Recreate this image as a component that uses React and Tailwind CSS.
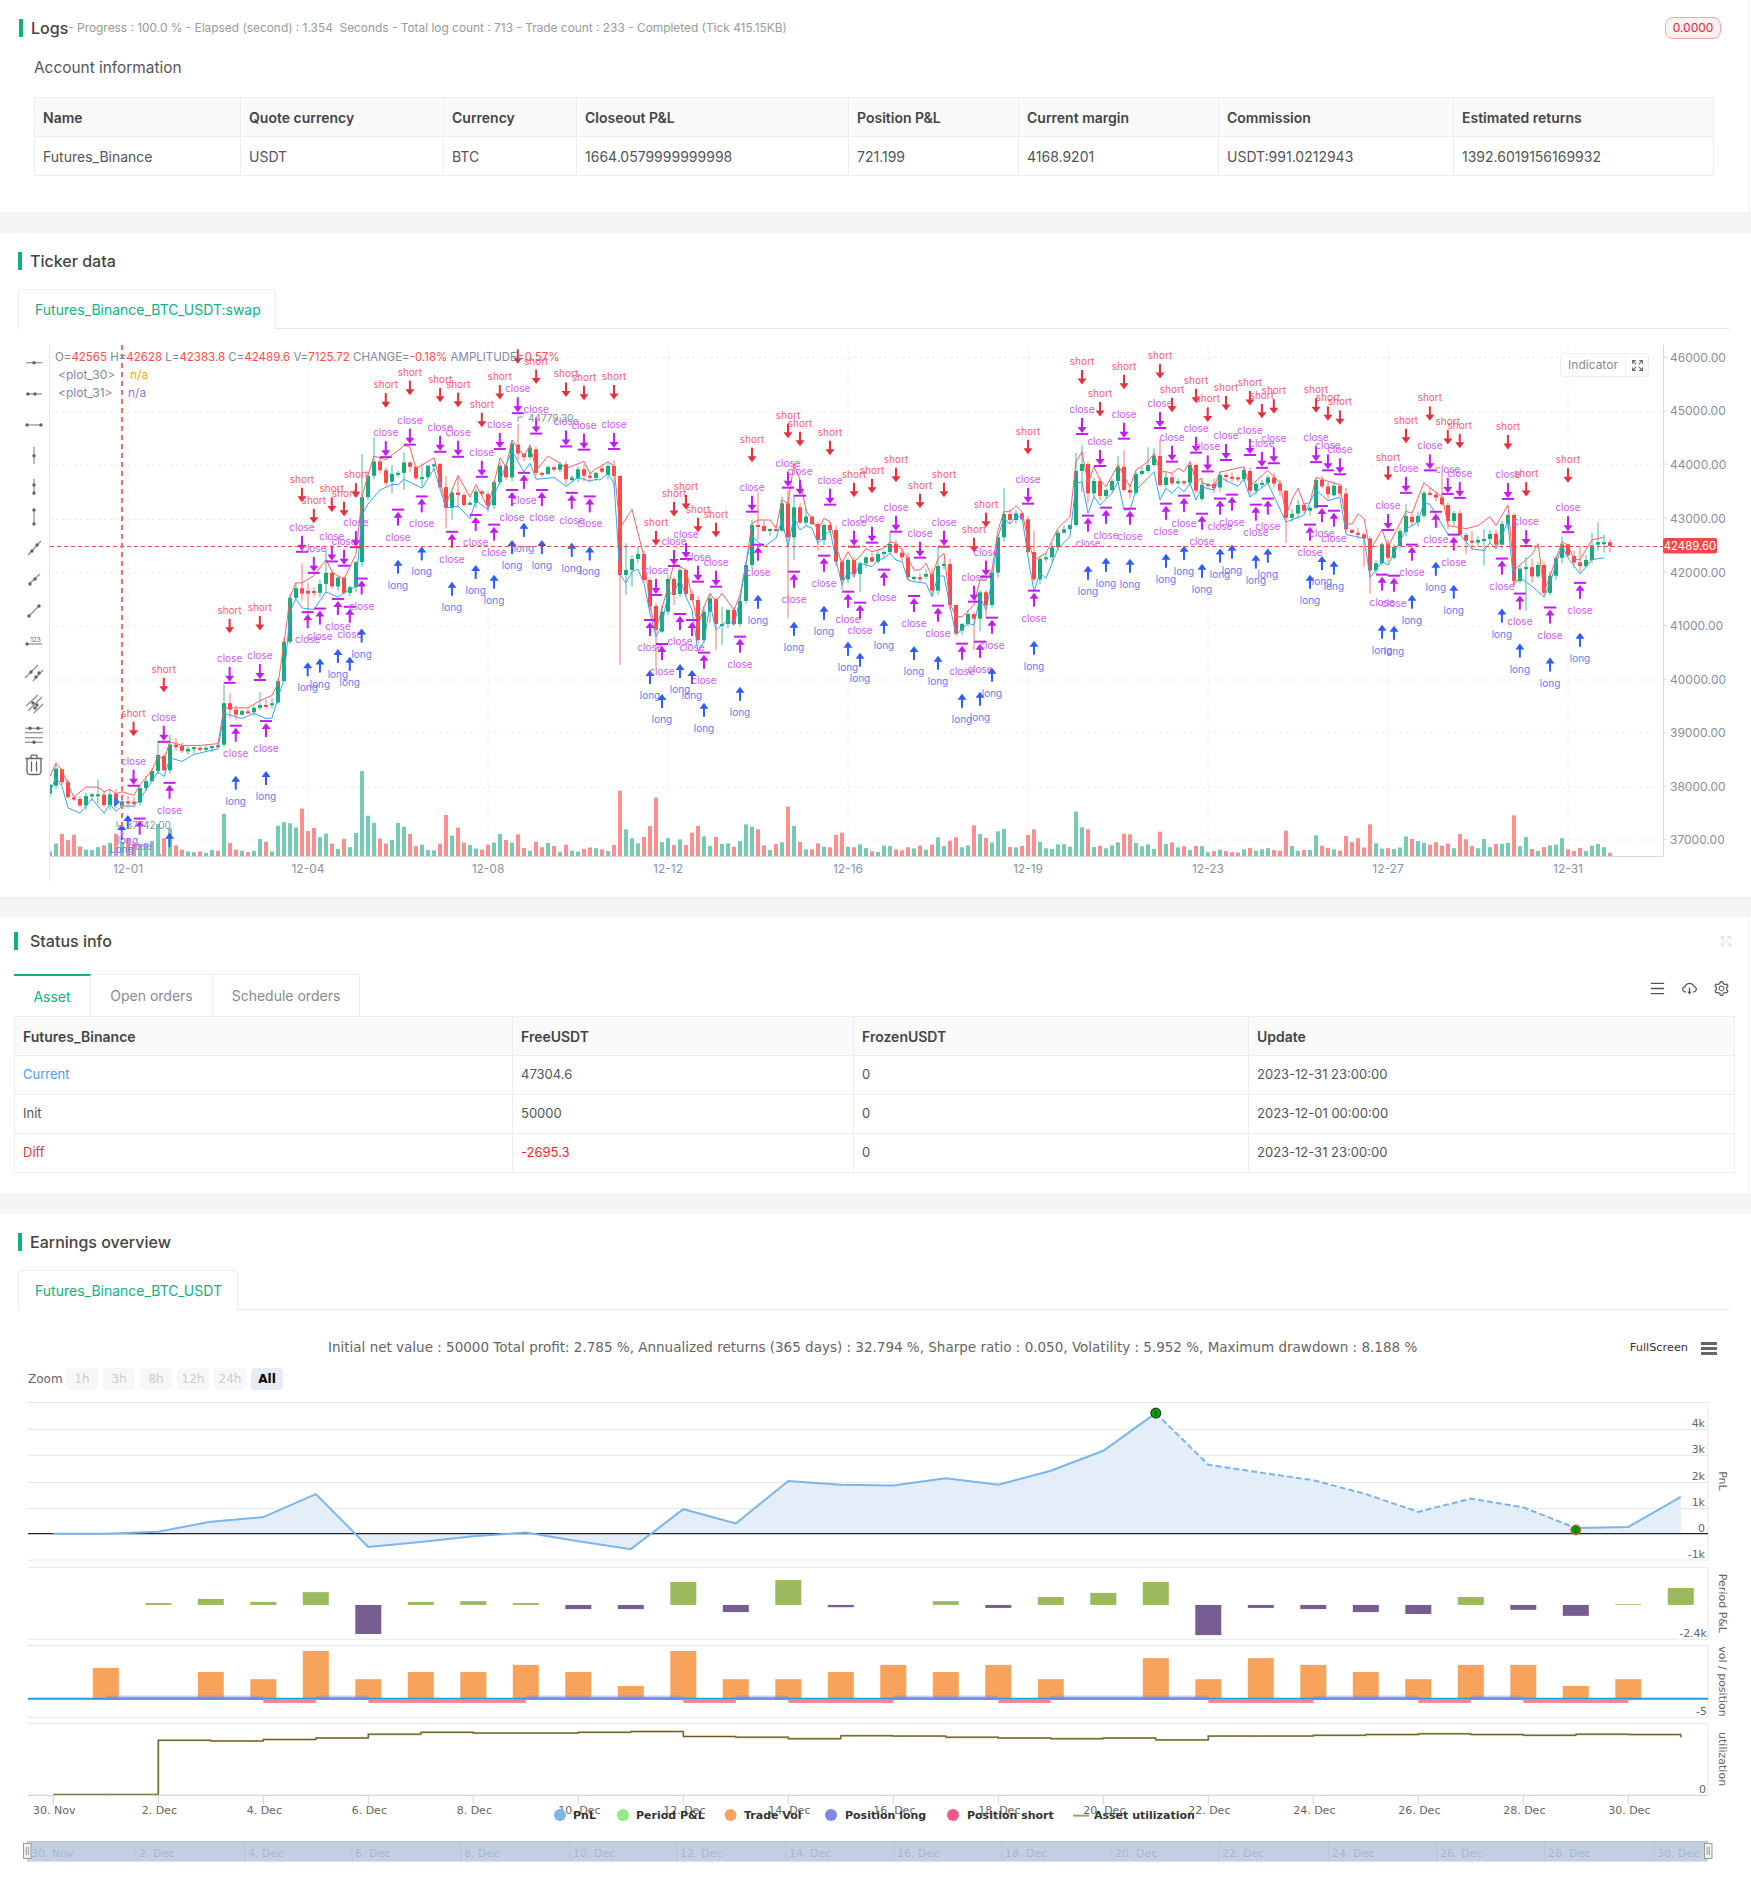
import React from "react";
import { AiOutlineCloudDownload, AiOutlineSetting, AiOutlineMenu } from "react-icons/ai";
import { Expand } from "lucide-react";

const INTER = "Inter, sans-serif";
const DJ = "'DejaVu Sans', sans-serif";

/* ---------- candle data traced from the picture ---------- */
const parse = (s) =>
  s.trim().split(/\s+/).map((t) => {
    const [a, b] = t.slice(1).split(",").map(Number);
    return { c: t[0], a, b };
  });

const segA = parse(`g1245,1270 g1200,1248 r1202,1238 r1238,1280 r1281,1285 r1285,1303 g1277,1303 g1272,1277 g1272,1275 r1273,1302 g1272,1302 r1270,1300 g1292,1305 r1292,1295 r1293,1295 g1255,1295 g1235,1255 g1207,1235 g1162,1207 r1165,1205 g1133,1205 r1133,1140 r1137,1150 g1145,1152 g1140,1144 r1142,1146 g1142,1146 g1137,1143 r1135,1137 g1017,1133 r1017,1035 r1035,1049 g1039,1049 r1040,1043 g1030,1042 g1022,1030 r1022,1026 g1017,1022 g955,1015 g845,955 g722,845 g695,722 r695,710 r702,710 r703,707 g683,708 g652,683 r652,690 g665,690 r665,708 g692,708 g622,692 g440,622 g380,440 g340,380 r340,365 r365,400 g375,397 g372,374 g343,372 r343,355 r355,387 g384,386 g352,384 g348,352 r347,412 r412,470 g427,470 r427,434 r434,462 g456,461 g424,456 r424,431 r431,463 g398,463 g352,398 r352,385 g290,385 r293,318 r318,328 g303,328 r306,372 r372,376 g356,375 r356,363 g348,363 r348,390 g385,392 g362,388 r362,380 r380,384 g372,386`);

const segB = parse(`r385,395 g378,405 r378,408 r408,705 g690,705 g657,690 g642,657 r642,720 r720,800 r798,870 g815,875 g717,815 r717,765 g690,762 r690,762 r762,780 r780,900 g815,900 g775,815 r777,852 g852,855 g810,852 r810,852 g783,852 g675,783 g555,675 r555,558 r558,573 g567,573 r567,573 g490,572 r490,592 g502,592 r502,548 g530,548 r530,552 r552,600 g555,600 r555,570 r570,665 r665,720 g660,718 r660,702 g670,702 g652,670 r652,665 g642,665 g636,641 g612,636 r612,638 r638,652 r652,712 g711,714 r712,714 g702,710 r702,752 g678,752 g672,678 r672,795 r795,880 g852,872 g822,852 r822,836 g757,836 r757,796 g698,795 g592,698 g522,592 r522,540 g520,540 r520,538 r538,636 r636,718 g657,718 g652,657 g622,652 g578,622 g568,578 g555,567 g393,555 g372,393 r372,460 g423,460 r423,468 g450,468 g423,450 g380,423 r380,450 r450,458 g402,458 g393,402 g375,393 g348,375 r348,435 g412,435 r412,430 g424,429 r424,429 g375,428 r375,452`);

const segC = parse(`g405,445 g403,407 r403,415 g378,413 r378,384 r383,388 r385,388 g364,390 r367,422 g403,422 g400,403 g385,400 r385,402 r402,422 r422,498 g487,498 g462,486 r462,478 g470,478 g392,470 r392,410 r410,432 g408,435 r408,430 r430,530 r532,540 r540,544 r544,556 r556,645 g625,645 g572,625 r570,610 g580,610 g535,577 g493,537 r495,510 g493,510 g428,492 r428,432 r433,441 r441,460 r462,507 g485,507 r485,545 r546,562 r562,567 g560,567 g557,560 g543,557 r542,573 g515,573 g490,515 r490,675 g640,675 g636,640 r636,662 g630,662 r630,708 g660,708 g610,660 g572,610 r572,603 r605,623 r623,633 g616,633 g575,616 g566,573 g566,568 r566,577`);

const volA = [1432,1410,1383,1400,1385,1418,1427,1428,1420,1415,1408,1383,1405,1395,1410,1410,1408,1403,1355,1395,1367,1415,1427,1432,1434,1432,1436,1428,1430,1327,1408,1427,1430,1434,1430,1397,1405,1432,1360,1350,1353,1365,1312,1375,1366,1392,1382,1410,1425,1397,1420,1380,1207,1332,1352,1396,1410,1400,1352,1363,1383,1417,1413,1428,1429,1410,1330,1388,1365,1407,1414,1424,1427,1413,1407,1383,1400,1407,1384,1422,1430,1405,1420,1408,1417,1433,1413,1430,1432,1425,1421,1423];
const volB = [388,393,375,212,328,355,370,351,318,233,366,354,375,358,375,338,318,349,378,351,372,370,380,363,313,320,328,376,390,372,367,260,318,366,388,388,370,380,382,345,338,380,382,373,384,394,396,377,378,388,391,382,385,377,389,374,352,378,362,352,382,376,316,342,354,367,334,327,381,382,378,345,328,366,385,387,373,373,380,275,322,328,381,377,385,376,367,341,343,369,379,373,387,335,372,367,382,379,390,378];
const volC = [1417,1434,1431,1427,1431,1434,1435,1426,1422,1430,1426,1423,1428,1430,1374,1417,1430,1428,1428,1387,1416,1422,1426,1430,1389,1406,1395,1421,1356,1409,1424,1423,1425,1421,1390,1397,1403,1408,1413,1406,1416,1410,1423,1383,1398,1417,1423,1397,1420,1411,1411,1408,1331,1417,1392,1425,1431,1420,1415,1413,1395,1426,1431,1422,1431,1416,1411,1420,1436];

const wickOver = {
  8:[1230,1300],18:[1125,1215],20:[1105,1215],21:[1115,1150],29:[965,1140],30:[990,1060],35:[985,1035],42:[625,730],43:[680,780],46:[585,710],
  52:[320,635],54:[272,390],57:[350,430],59:[315,420],62:[345,410],66:[380,528],67:[420,505],68:[380,470],73:[425,482],78:[235,335],
  94:[360,445],95:[405,975],96:[610,765],97:[645,740],98:[620,670],101:[790,980],102:[795,878],103:[705,825],104:[710,795],106:[685,770],110:[760,850],111:[770,930],112:[800,915],
  118:[455,600],120:[565,587],122:[470,575],123:[450,835],124:[465,660],126:[505,555],128:[545,632],129:[550,615],132:[660,750],133:[655,730],135:[665,755],140:[575,640],
  148:[620,765],154:[815,930],155:[750,873],156:[750,830],159:[445,605],164:[572,725],165:[650,733],171:[338,560],172:[315,455],173:[365,490],178:[348,430],179:[330,455],183:[322,400],184:[325,380],185:[298,440],
  206:[420,568],219:[540,635],220:[550,710],226:[460,550],232:[372,465],233:[455,530],236:[540,600],237:[535,590],239:[530,632],246:[608,758],247:[612,680],252:[550,625],255:[578,650],257:[540,625],258:[510,590],259:[545,595],260:[558,595],
};

const rnd = (n) => {
  const v = Math.sin(n * 12.9898) * 43758.5453;
  return v - Math.floor(v);
};
const ya = (z) => 340 + z / 2.8;
const yb = (z) => 340 + z / 3;

const candles = [];
const addSeg = (seg, base, yf, vols, vf) =>
  seg.forEach((d, i) => {
    const k = base + i;
    const o = wickOver[k];
    const top = yf(d.a);
    const bot = yf(d.b);
    const wt = o ? yf(o[0]) : top - 0.5 - rnd(k) * 5;
    const wb = o ? yf(o[1]) : bot + 0.5 + rnd(k + 500) * 5;
    candles.push({ k, x: 50 + 6 * k, c: d.c, top, bot, wt, wb, v: vf(vols[i] ?? 1430) });
  });
addSeg(segA, 0, ya, volA, ya);
addSeg(segB, 92, yb, volB, (z) => 720 + z / 3);
addSeg(segC, 192, ya, volC, ya);

/* ---------- channel lines ---------- */
const pts = (arr, fx, fy) => {
  const o = [];
  for (let i = 0; i < arr.length; i += 2) o.push(`${fx(arr[i]).toFixed(1)},${fy(arr[i + 1]).toFixed(1)}`);
  return o;
};
const fxA = (z) => z / 2.613;
const fxB = (z) => 600 + z / 3;
const fxC = (z) => 910 + z / 3;
const fxD = (z) => 1200 + z / 2.845;

const redLine = [
  ...pts([131,1222,146,1185,162,1205,178,1245,193,1280,225,1252,256,1252,272,1265,287,1258,303,1270,319,1265,350,1275,366,1245,397,1205,413,1165,429,1175,444,1125,476,1135,523,1135,570,1130,585,1030,617,1030,648,1030,679,1010,711,995,727,960,742,850,758,720,773,680,789,680,820,660,852,615,868,650,883,660,899,670,930,600,946,440,961,380,977,325,1008,335,1040,310,1056,295,1071,300,1087,360,1134,330,1165,460,1197,380,1228,440,1244,405,1275,470,1307,330,1322,355,1338,280,1369,325,1385,295,1401,365,1432,325,1463,345,1479,360,1526,340,1542,375,1557,360], fxA, ya),
  ...pts([0,380,24,365,42,378,60,565,96,508,132,650,150,800,168,870,204,740,222,670,258,690,276,770,294,860,312,800,330,760,348,785,366,760,402,810,420,765,438,670,456,550,474,540,510,540,528,565,546,480,564,490,582,370,600,420,618,510,654,570,672,535,690,545,708,620,726,670,744,635,762,665,780,650,798,625,816,635,852,625,870,605,888,610,906,630,924,655], fxB, yb),
  ...pts([12,690,30,690,48,670,66,710,84,655,102,640,120,790,138,830,156,830,192,795,210,720,228,720,246,690,264,570,282,515,300,515,318,497,336,515,354,600,372,660,408,640,444,565,480,530,498,365,516,335,534,430,552,380,570,420,588,440,624,375,660,440,678,390,714,365,732,340,750,395,768,395,786,400,804,385,822,395,840,365,858,425,876,415], fxC, yb),
  ...pts([6,400,40,410,57,370,125,355,142,410,193,365,228,400,245,490,262,445,279,415,296,460,313,455,330,385,364,395,398,405,416,515,433,515,450,487,467,500,484,590,518,530,535,580,586,480,603,485,637,400,689,440,706,520,757,528,791,520,825,495,842,520,876,462,893,645,910,630,945,600,962,570,979,705,996,660,1030,565,1047,575,1064,615,1081,615,1115,560,1149,552], fxD, ya),
].join(" ");

const blueLine = [
  ...pts([131,1265,146,1225,162,1250,178,1310,209,1325,240,1285,272,1325,287,1300,303,1320,319,1305,350,1305,366,1285,397,1235,413,1210,429,1222,444,1170,476,1180,507,1160,570,1145,585,1045,632,1060,664,1045,695,1060,711,1058,727,1000,742,950,758,760,773,725,789,750,820,755,852,705,883,720,899,708,930,690,946,490,961,460,993,420,1024,405,1040,405,1056,390,1103,415,1134,360,1165,470,1197,465,1228,500,1244,450,1275,475,1307,395,1322,350,1338,310,1369,370,1385,345,1401,390,1448,385,1479,410,1510,385,1542,395,1557,390], fxA, ya),
  ...pts([0,420,24,400,42,430,60,705,78,728,96,695,114,688,132,730,150,820,168,890,186,855,204,760,222,760,240,715,258,770,276,810,294,935,312,905,330,790,348,870,384,840,402,855,420,780,438,670,456,590,492,620,528,595,546,540,564,620,582,530,600,570,618,557,636,565,654,610,690,570,708,660,726,735,744,690,762,710,780,670,816,680,834,660,852,655,870,640,888,660,906,665,924,720], fxB, yb),
  ...pts([12,725,48,730,66,770,84,708,102,708,120,800,138,885,174,850,192,855,210,770,228,810,246,720,264,590,282,535,300,552,318,530,336,530,354,650,372,755,390,700,408,715,444,625,480,590,498,430,516,425,534,520,552,470,570,495,606,460,624,425,642,510,660,510,678,450,732,395,750,480,768,445,786,460,804,440,822,455,840,430,858,480,876,440], fxC, yb),
  ...pts([6,412,40,420,57,385,108,410,125,390,142,440,193,400,245,510,296,490,330,420,364,450,398,440,416,545,467,555,484,665,518,620,535,630,586,530,620,510,637,455,654,460,706,545,740,545,774,585,808,590,825,568,842,585,876,510,893,685,910,665,945,690,979,720,996,680,1030,575,1047,610,1081,655,1115,615,1149,610], fxD, ya),
].join(" ");

/* ---------- trade markers ---------- */
const tops = [
  ...[[349,1248],[428,1125],[600,960],[679,952],[789,593],[820,652],[867,620],[899,632],[930,580],[1008,328],[1071,293],[1150,313],[1197,327],[1259,383],[1306,305],[1353,205],[1401,262],[1479,298],[1526,307]].map(([x,y])=>[fxA(x),ya(y)]),
  ...[[42,327],[168,765],[222,678],[258,657],[294,725],[348,740],[456,515],[564,443],[600,467],[690,494],[762,620],[816,608],[888,575]].map(([x,y])=>[fxB(x),yb(y)]),
  ...[[30,653],[102,620],[192,785],[228,710],[354,491],[516,282],[570,378],[642,296],[750,264],[786,365],[858,338]].map(([x,y])=>[fxC(x),yb(y)]),
  ...[[22,368],[74,336],[142,322],[176,358],[210,345],[330,342],[364,365],[398,376],[535,532],[586,428],[654,365],[705,431],[739,442],[876,445],[928,577],[1047,538]].map(([x,y])=>[fxD(x),ya(y)]),
];
const bottoms = [
  ...[[365,1340],[443,1240],[616,1080],[695,1067],[804,762],[836,752],[883,725],[914,747],[945,668],[1040,475],[1102,438],[1181,537],[1243,490],[1291,517],[1338,420],[1369,372],[1416,420],[1494,428],[1541,438]].map(([x,y])=>[fxA(x),ya(y)]),
  ...[[150,840],[186,912],[240,822],[276,840],[312,938],[420,890],[474,614],[582,695],[672,647],[744,755],[780,788],[852,689]].map(([x,y])=>[fxB(x),yb(y)]),
  ...[[12,768],[84,797],[156,911],[210,905],[246,833],[372,752],[534,527],[588,503],[660,506],[768,491],[822,467],[876,521]].map(([x,y])=>[fxC(x),yb(y)]),
  ...[[57,444],[91,433],[159,461],[193,444],[313,517],[347,465],[381,478],[518,657],[552,660],[603,573],[671,481],[722,545],[859,612],[910,710],[996,749],[1081,680]].map(([x,y])=>[fxD(x),ya(y)]),
];

const ArrowDown = ({ x, y1, y2, color }) => (
  <g>
    <line x1={x} x2={x} y1={y1} y2={y2 - 5} stroke={color} strokeWidth="2" />
    <polygon points={`${x - 4.5},${y2 - 6} ${x + 4.5},${y2 - 6} ${x},${y2}`} fill={color} />
  </g>
);
const ArrowUp = ({ x, y1, y2, color }) => (
  <g>
    <line x1={x} x2={x} y1={y1 + 5} y2={y2} stroke={color} strokeWidth="2" />
    <polygon points={`${x - 4.5},${y1 + 6} ${x + 4.5},${y1 + 6} ${x},${y1}`} fill={color} />
  </g>
);
const Lab = ({ x, y, color, children }) => (
  <text x={x} y={y} fill={color} fontSize="10" fontFamily={INTER} textAnchor="middle" dominantBaseline="central">
    {children}
  </text>
);

const RED = "#e5303e", MAG = "#c31cf0", BLU = "#2f5cff";
const LSHORT = "#ff5c6c", LCLOSE = "#cc5cf5", LLONG = "#5f7cf5";

const TopSet = ({ x, a }) => (
  <g>
    <Lab x={x} y={a - 73} color={LSHORT}>short</Lab>
    <ArrowDown x={x} y1={a - 64} y2={a - 49.5} color={RED} />
    <Lab x={x} y={a - 25} color={LCLOSE}>close</Lab>
    <ArrowDown x={x} y1={a - 16} y2={a - 1} color={MAG} />
    <rect x={x - 6} y={a - 1} width="12" height="2" fill={MAG} />
  </g>
);
const BottomSet = ({ x, a }) => (
  <g>
    <rect x={x - 6} y={a - 1} width="12" height="2" fill={MAG} />
    <ArrowUp x={x} y1={a + 2} y2={a + 16} color={MAG} />
    <Lab x={x} y={a + 27} color={LCLOSE}>close</Lab>
    <ArrowUp x={x} y1={a + 50} y2={a + 64} color={BLU} />
    <Lab x={x} y={a + 75} color={LLONG}>long</Lab>
  </g>
);

/* ---------- drawing tool bar ---------- */
const T = "#5f6368";
const dot = (x, y, r = 1.7) => <circle cx={x} cy={y} r={r} fill={T} />;
const ln = (a, b, c, d, w = 1.2, col = "#8a8d91") => <line x1={a} y1={b} x2={c} y2={d} stroke={col} strokeWidth={w} />;
const ToolIcons = () => (
  <g>
    <g>{ln(26,362.7,42,362.7)}{dot(34,362.7)}</g>
    <g>{ln(26,394,42,394)}{dot(28,394)}{dot(35,394)}</g>
    <g>{ln(27,425,41,425)}{dot(27,425)}{dot(41,425)}</g>
    <g>{ln(34,447,34,464)}{dot(34,455.7)}</g>
    <g>{ln(34,479,34,495)}{dot(34,485)}{dot(34,493)}</g>
    <g>{ln(34,510,34,524)}{dot(34,510)}{dot(34,524)}</g>
    <g>{ln(28,555,41,541)}{dot(32,551)}{dot(37,545)}</g>
    <g>{ln(29,584,40,574)}{dot(30,584)}{dot(35,579)}</g>
    <g>{ln(29,616,39,606)}{dot(29,616)}{dot(39,606)}</g>
    <g>
      {ln(27,644,42,644)}{dot(27,644)}
      <text x="35.5" y="642" fontSize="6.5" fill={T} fontFamily={INTER} textAnchor="middle">123</text>
    </g>
    <g>{ln(25,678,38,665)}{ln(33,681,43,670)}{dot(31,672)}{dot(36,677)}{dot(39,673)}</g>
    <g>{ln(26,706,38,695)}{ln(28,711,42,697)}{ln(34,713,43,704)}{dot(33,703)}{dot(37,705)}{dot(35,708)}</g>
    <g>
      {ln(25,728.3,43,728.3)}{ln(25,732.7,43,732.7)}{ln(25,737.7,43,737.7)}{ln(25,742.3,43,742.3)}
      {dot(30,728.3)}{dot(38,728.3)}{dot(34,742.3)}
    </g>
    <g fill="none" stroke={T} strokeWidth="1.3" strokeLinecap="round">
      <path d="M26 758.5h16" />
      <path d="M31 758v-1.8a1 1 0 0 1 1-1h4a1 1 0 0 1 1 1v1.8" />
      <path d="M27 759v12.5a3 3 0 0 0 3 3h8a3 3 0 0 0 3-3V759" />
      <path d="M31.5 762v9M36.5 762v9" />
    </g>
  </g>
);

/* ---------- ticker chart ---------- */
const gridY = [357.9, 412, 465, 519.6, 573, 626, 680, 733, 787, 840];
const yLabels = [[357.4,"46000.00"],[410.9,"45000.00"],[464.1,"44000.00"],[518.1,"43000.00"],[572,"42000.00"],[625.5,"41000.00"],[679.1,"40000.00"],[732.2,"39000.00"],[786.1,"38000.00"],[839.1,"37000.00"]];
const xLabels = ["12-01","12-04","12-08","12-12","12-16","12-19","12-23","12-27","12-31"];

const TickerChart = () => (
  <svg className="block" width="1749" height="568" viewBox="0 329 1749 568">
    <defs>
      <clipPath id="plotclip"><rect x="50" y="345" width="1613" height="511" /></clipPath>
    </defs>
    {gridY.map((y) => (
      <line key={y} x1="50" x2="1663" y1={y} y2={y} stroke="#ececec" strokeDasharray="3 3" />
    ))}
    {xLabels.map((_, i) => (
      <line key={i} x1={128 + 180 * i} x2={128 + 180 * i} y1="345" y2="856" stroke="#ececec" strokeDasharray="3 3" />
    ))}
    <line x1="49.5" x2="49.5" y1="345" y2="881" stroke="#e8e8e8" />
    <line x1="1663.5" x2="1663.5" y1="345" y2="856" stroke="#d5d8dd" />
    <line x1="50" x2="1663" y1="856.5" y2="856.5" stroke="#d5d8dd" />
    {xLabels.map((t, i) => (
      <g key={t}>
        <line x1={128 + 180 * i} x2={128 + 180 * i} y1="856" y2="860" stroke="#d5d8dd" />
        <text x={128 + 180 * i} y="868.6" fontSize="12" fill="#8a93a3" fontFamily={INTER} textAnchor="middle" dominantBaseline="central">{t}</text>
      </g>
    ))}
    {yLabels.map(([y, t]) => (
      <g key={t}>
        <line x1="1663" x2="1667" y1={y} y2={y} stroke="#d5d8dd" />
        <text x="1670" y={y} fontSize="12" fill="#8a8f9c" fontFamily={INTER} dominantBaseline="central">{t}</text>
      </g>
    ))}
    <ToolIcons />
    <g clipPath="url(#plotclip)">
      {candles.map((d) => (
        <rect key={"v" + d.k} x={d.x - 2} y={d.v} width="4" height={856 - d.v} fill={d.c === "g" ? "#76ccb0" : "#ff8f8f"} />
      ))}
      {candles.map((d) => (
        <g key={d.k}>
          <line x1={d.x} x2={d.x} y1={d.wt} y2={d.wb} stroke={d.c === "g" ? "#85d3b9" : "#ffa3a3"} strokeWidth="1.5" />
          <rect x={d.x - 2} y={d.top} width="4" height={Math.max(d.bot - d.top, 2)} fill={d.c === "g" ? "#17ab7c" : "#ff4848"} />
        </g>
      ))}
      <polyline points={redLine} fill="none" stroke="#ff5f5f" strokeWidth="1" />
      <polyline points={blueLine} fill="none" stroke="#36a3f2" strokeWidth="1" />
      {tops.map(([x, a], i) => <TopSet key={i} x={x} a={a} />)}
      {bottoms.map(([x, a], i) => <BottomSet key={i} x={x} a={a} />)}
      <ArrowUp x={127.8} y1={815} y2={829} color={BLU} />
      <Lab x={127.8} y={840} color={LLONG}>long</Lab>
      <ArrowUp x={121.7} y1={824} y2={840} color={BLU} />
      <Lab x={121.7} y={849} color={LLONG}>Long</Lab>
      <polygon points="114,797 120,802 114,807" fill="#3f6bff" />
      <text x="528" y="418" fontSize="10" fill="#8a8f9c" fontFamily={INTER} dominantBaseline="central">44779.30</text>
      <path d="M523 417h-5v5" fill="none" stroke="#8a8f9c" strokeWidth="1" />
      <text x="126" y="824.6" fontSize="10" fill="#8a8f9c" fontFamily={INTER} dominantBaseline="central">37742.00</text>
      <path d="M122 826h-5v-5" fill="none" stroke="#8a8f9c" strokeWidth="1" />
    </g>
    <line x1="50" x2="1663" y1="546.5" y2="546.5" stroke="#f04b55" strokeDasharray="4 3" />
    <line x1="122" x2="122" y1="345" y2="836" stroke="#ff6b6b" strokeWidth="2" strokeDasharray="5 4" />
    <rect x="1663" y="538" width="54" height="15.6" rx="2" fill="#f0494c" />
    <text x="1690" y="546" fontSize="11.4" fill="#fff" fontFamily={INTER} textAnchor="middle" dominantBaseline="central">42489.60</text>
  </svg>
);

/* ---------- earnings chart ---------- */
const dx = (d) => 53.3 + 52.5 * d;
const ey = (z) => 1300 + z / 2.653;
const pnl = [620,620,615,588,576,515,655,642,627,617,640,661,555,593,480,490,492,473,490,453,400,300,437,458,478,515,562,527,550,605,602,522];
const ppts = (a, b) => pnl.slice(a, b + 1).map((v, i) => `${dx(a + i)},${ey(v)}`).join(" ");
const period = [[2,804,809,"g"],[3,793,809,"g"],[4,801,809,"g"],[5,775,809,"g"],[6,809,886,"p"],[7,801,809,"g"],[8,799,809,"g"],[9,804,809,"g"],[10,809,820,"p"],[11,809,820,"p"],[12,748,809,"g"],[13,809,828,"p"],[14,743,809,"g"],[15,809,815,"p"],[17,799,809,"g"],[18,809,817,"p"],[19,788,809,"g"],[20,777,809,"g"],[21,748,809,"g"],[22,809,889,"p"],[23,809,817,"p"],[24,809,820,"p"],[25,809,828,"p"],[26,809,833,"p"],[27,788,809,"g"],[28,809,822,"p"],[29,809,838,"p"],[30,807,809,"g"],[31,764,809,"g"]];
const tvol = [[1,976],[3,987],[4,1006],[5,931],[6,1006],[7,987],[8,987],[9,968],[10,987],[11,1024],[12,931],[13,1006],[14,1006],[15,987],[16,968],[17,987],[18,968],[19,1006],[21,950],[22,1006],[23,950],[24,968],[25,987],[26,1006],[27,968],[28,968],[29,1024],[30,1006]];
const longs = [[1,4],[5,6],[9,12],[13,14],[16,18],[19,22],[24,26],[27,28]];
const shorts = [[4,5],[6,9],[12,13],[14,16],[18,19],[22,24],[26,27],[28,30]];
const util = [1312,1312,1168,1170,1166,1162,1152,1147,1149,1149,1147,1145,1158,1160,1164,1156,1157,1160,1162,1164,1162,1167,1157,1157,1155,1153,1151,1153,1155,1152,1153];
const utilPath = (() => {
  let p = `M${dx(0)} ${ey(util[0])}`;
  util.forEach((v, i) => {
    p += ` L${dx(i)} ${ey(v)} L${dx(i + 1)} ${ey(v)}`;
  });
  p += ` L${dx(31)} ${ey(1160)}`;
  return p;
})();
const axisT = ["30. Nov","2. Dec","4. Dec","6. Dec","8. Dec","10. Dec","12. Dec","14. Dec","16. Dec","18. Dec","20. Dec","22. Dec","24. Dec","26. Dec","28. Dec","30. Dec"];
const navX = [28,136,245,352,461,570,677,786,894,1002,1112,1219,1329,1437,1545,1654];
const G = "#e6e6e6";
const ET = ({ x, y, children, anchor = "start", size = 11, fill = "#666", bold, rot }) => (
  <text x={x} y={y} fontSize={size} fill={fill} fontFamily={DJ} fontWeight={bold ? 700 : 400} textAnchor={anchor} dominantBaseline="central" transform={rot ? `rotate(90 ${x} ${y})` : undefined}>
    {children}
  </text>
);
const legend = [[560,573,"#7cb5ec","PnL"],[623,636,"#90ed7d","Period P&L"],[730.6,744,"#f7a35c","Trade Vol"],[831,845,"#8085e9","Position long"],[953,967,"#f15c80","Position short"]];

const EarningsChart = () => (
  <svg className="block" width="1749" height="491" viewBox="0 1400 1749 491">
    {[272,343,412,484,553,690,709,900,916,1107,1123].map((z) => (
      <line key={z} x1="28" x2="1708" y1={ey(z)} y2={ey(z)} stroke={G} strokeWidth="1" />
    ))}
    {[[272,690],[709,900],[916,1107],[1123,1314]].map(([a, b]) => (
      <line key={a} x1="1708" x2="1708" y1={ey(a)} y2={ey(b)} stroke={G} />
    ))}
    <polygon points={`${dx(0)},${ey(620)} ${ppts(0, 31)} ${dx(31)},${ey(620)}`} fill="#e4eef8" />
    <line x1="28" x2="1708" y1={ey(620)} y2={ey(620)} stroke="#1b2330" strokeWidth="1.2" />
    <polyline points={ppts(0, 21)} fill="none" stroke="#7cb5ec" strokeWidth="2" />
    <polyline points={ppts(21, 29)} fill="none" stroke="#7cb5ec" strokeWidth="2" strokeDasharray="6 3" />
    <polyline points={ppts(29, 31)} fill="none" stroke="#7cb5ec" strokeWidth="2" />
    <circle cx={dx(21)} cy={ey(300)} r="5" fill="#0a9a0a" stroke="#222" />
    <line x1={dx(21)} x2={dx(21)} y1={ey(300) - 3} y2={ey(300) + 3} stroke="#0b3d0b" />
    <circle cx={dx(29)} cy={ey(610)} r="5" fill="#0a9a0a" stroke="#f15c4c" />
    <line x1={dx(29)} x2={dx(29)} y1={ey(610) - 3} y2={ey(610) + 3} stroke="#0b3d0b" />
    {[[327,"4k"],[396,"3k"],[467,"2k"],[537,"1k"],[605,"0"],[675,"-1k"]].map(([z, t]) => (
      <ET key={t} x={1705} y={ey(z)} anchor="end">{t}</ET>
    ))}
    <ET x={1722} y={ey(480)} anchor="middle" size={11} rot>PnL</ET>

    {period.map(([d, a, b, c]) => (
      <rect key={d} x={dx(d) - 13} y={ey(a)} width="26" height={ey(b) - ey(a)} fill={c === "g" ? "#9bba60" : "#775d91"} />
    ))}
    <ET x={1707} y={ey(884)} anchor="end">-2.4k</ET>
    <ET x={1722} y={ey(805)} anchor="middle" size={11} rot>Period P&amp;L</ET>

    {tvol.map(([d, a]) => (
      <rect key={d} x={dx(d) - 13} y={ey(a)} width="26" height={ey(1060) - ey(a)} fill="#f7a35c" />
    ))}
    <line x1="28" x2="1708" y1={ey(1058)} y2={ey(1058)} stroke="#1a9fd8" strokeWidth="2" />
    {longs.map(([a, b]) => (
      <g key={a}>
        <rect x={dx(a)} y={ey(1048)} width={dx(b) - dx(a)} height={ey(1060) - ey(1048)} fill="#8085e9" opacity="0.2" />
        <rect x={dx(a)} y={ey(1052)} width={dx(b) - dx(a)} height={ey(1060) - ey(1052)} fill="#8085e9" opacity="0.6" />
      </g>
    ))}
    {shorts.map(([a, b]) => (
      <rect key={a} x={dx(a)} y={ey(1059)} width={dx(b) - dx(a)} height={ey(1069) - ey(1059)} fill="#f8809c" />
    ))}
    <ET x={1707} y={ey(1092)} anchor="end">-5</ET>
    <ET x={1722} y={ey(1012)} anchor="middle" size={11} rot>vol / position</ET>

    <path d={utilPath} fill="none" stroke="#b5ab85" strokeWidth="2" />
    <path d={utilPath} fill="none" stroke="#6b5a1c" strokeWidth="1" />
    <ET x={1706} y={ey(1298)} anchor="end">0</ET>
    <ET x={1722} y={ey(1218)} anchor="middle" size={11} rot>utilization</ET>

    <line x1="28" x2="1708" y1={ey(1314)} y2={ey(1314)} stroke="#ccd6eb" strokeWidth="1.2" />
    {axisT.map((t, i) => (
      <g key={t}>
        <line x1={dx(i * 2)} x2={dx(i * 2)} y1={ey(1314)} y2={ey(1338)} stroke="#ccd6eb" />
        <ET x={dx(i * 2) + 1} y={ey(1354)} anchor="middle">{t}</ET>
      </g>
    ))}
    {legend.map(([cx, tx, col, t]) => (
      <g key={t}>
        <circle cx={cx} cy={ey(1366)} r="6" fill={col} />
        <ET x={tx} y={ey(1368)} size={11} fill="#333" bold>{t}</ET>
      </g>
    ))}
    <line x1="1073" x2="1089" y1={ey(1368)} y2={ey(1368)} stroke="#a89a6e" strokeWidth="2" />
    <ET x={1094} y={ey(1368)} size={11} fill="#333" bold>Asset utilization</ET>

    <rect x="27" y="1841.6" width="1681" height="20" fill="#c4d0e2" />
    <line x1="27" x2="1708" y1="1841.6" y2="1841.6" stroke="#b4c0d4" />
    {navX.map((x, i) => (
      <g key={x}>
        {i > 0 && <line x1={x} x2={x} y1="1842" y2="1861" stroke="#b7c3d7" />}
        <ET x={x + 3} y={1853} fill="#aab6ca">{axisT[i]}</ET>
      </g>
    ))}
    {[23.5, 1704.5].map((x) => (
      <g key={x}>
        <rect x={x} y="1843.5" width="7.5" height="15" fill="#f2f2f2" stroke="#999" />
        <line x1={x + 2.7} x2={x + 2.7} y1="1847" y2="1855" stroke="#999" />
        <line x1={x + 4.8} x2={x + 4.8} y1="1847" y2="1855" stroke="#999" />
      </g>
    ))}
  </svg>
);

/* ---------- page parts ---------- */
const Title = ({ children, gap }) => (
  <div className={`flex items-center h-[18px] ${gap}`}>
    <span className="w-[4px] h-[18px] bg-[#12b07f]" />
    <span className="text-[16px] font-medium leading-[18px] text-[#444]">{children}</span>
  </div>
);
const Band = () => <div className="h-[20px] bg-[#f4f5f7] border-t border-[#eeeff1]" />;
const Th = ({ children, w }) => (
  <th className={`${w} h-[39px] px-[8px] text-left text-[14px] font-semibold text-[#444] bg-[#fafafa] border border-[#eeeeee]`}>{children}</th>
);
const Td = ({ children, cls = "text-[#555]", size = "text-[14px]" }) => (
  <td className={`h-[39px] px-[8px] ${size} ${cls} border border-[#eeeeee]`}>{children}</td>
);
const GreenTab = ({ children, w }) => (
  <div className="ml-[18px] w-[1712px] h-[40px] border-b border-[#eaeaea] flex">
    <div className={`${w} h-[40px] pl-[16px] flex items-center text-[14px] text-[#12b07f] bg-white border border-b-0 border-[#eeeeee] rounded-t`}>{children}</div>
  </div>
);

export default function App() {
  return (
    <div className="w-[1751px] min-h-[1891px] bg-white font-[Inter,sans-serif] text-[#333]">
      {/* Logs */}
      <section className="w-[1749px] h-[212px] pt-[19px] pl-[19px] border-r border-[#eeeff1]">
        <div className="flex items-center justify-between h-[18px] pr-[27px]">
          <div className="flex items-center h-[18px] gap-[8px]">
            <span className="w-[4px] h-[18px] bg-[#12b07f]" />
            <span className="text-[16px] font-medium text-[#444] leading-[18px]">Logs</span>
            <span className="-ml-[8px] text-[11.9px] text-[#9a9a9a] whitespace-pre">- Progress : 100.0 % - Elapsed (second) : 1.354  Seconds - Total log count : 713 - Trade count : 233 - Completed (Tick 415.15KB)</span>
          </div>
          <span className="w-[56px] h-[22px] flex items-center justify-center rounded-lg border border-[#ffa39e] bg-[#fff1f0] text-[12px] text-[#e5273d]">0.0000</span>
        </div>
        <div className="ml-[15px] mt-[19px] text-[15.4px] leading-[24px] text-[#555]">Account information</div>
        <table className="ml-[15px] mt-[17px] w-[1679px] table-fixed border-collapse">
          <thead>
            <tr>
              <Th w="w-[206px]">Name</Th>
              <Th w="w-[203px]">Quote currency</Th>
              <Th w="w-[133px]">Currency</Th>
              <Th w="w-[272px]">Closeout P&amp;L</Th>
              <Th w="w-[170px]">Position P&amp;L</Th>
              <Th w="w-[200px]">Current margin</Th>
              <Th w="w-[235px]">Commission</Th>
              <Th w="w-[260px]">Estimated returns</Th>
            </tr>
          </thead>
          <tbody>
            <tr>
              <Td>Futures_Binance</Td>
              <Td>USDT</Td>
              <Td>BTC</Td>
              <Td>1664.0579999999998</Td>
              <Td>721.199</Td>
              <Td>4168.9201</Td>
              <Td>USDT:991.0212943</Td>
              <Td>1392.6019156169932</Td>
            </tr>
          </tbody>
        </table>
      </section>
      <div className="h-[21px] bg-[#f4f5f7] border-t border-[#eeeff1]" />

      {/* Ticker data */}
      <section className="w-[1749px] h-[664px] pt-[19px]">
        <div className="ml-[18px]"><Title gap="gap-[8px]">Ticker data</Title></div>
        <div className="mt-[19px]"><GreenTab w="w-[258px]">Futures_Binance_BTC_USDT:swap</GreenTab></div>
        <div className="relative">
          <TickerChart />
          <div className="absolute left-[55px] top-[20px] text-[11.5px] leading-[16px] text-[#7f8a9c] whitespace-pre">
            O=<span className="text-[#ff4d4f]">42565</span> H=<span className="text-[#ff4d4f]">42628</span> L=<span className="text-[#ff4d4f]">42383.8</span> C=<span className="text-[#ff4d4f]">42489.6</span> V=<span className="text-[#ff4d4f]">7125.72</span> CHANGE=<span className="text-[#ff4d4f]">-0.18%</span> AMPLITUDE=<span className="text-[#ff4d4f]">0.57%</span>
          </div>
          <div className="absolute left-[58px] top-[38px] text-[12px] leading-[16px] text-[#7f8a9c]">&lt;plot_30&gt;</div>
          <div className="absolute left-[130px] top-[38px] text-[12px] leading-[16px] text-[#f5a623]">n/a</div>
          <div className="absolute left-[58px] top-[56px] text-[12px] leading-[16px] text-[#7f8a9c]">&lt;plot_31&gt;</div>
          <div className="absolute left-[128px] top-[56px] text-[12px] leading-[16px] text-[#a56ee0]">n/a</div>
          <div className="absolute left-[1560px] top-[24px] w-[89px] h-[24px] flex items-center bg-white border border-[#eeeeee] rounded text-[12px] text-[#8a8a8a]">
            <span className="w-[65px] text-center border-r border-[#eeeeee] leading-[22px]">Indicator</span>
            <span className="flex-1 flex justify-center"><Expand size={13} color="#666" /></span>
          </div>
        </div>
      </section>
      <Band />

      {/* Status info */}
      <section className="w-[1749px] h-[277px] pt-[15px] border-r border-[#eeeff1]">
        <div className="ml-[14px] flex items-center justify-between pr-[16px]">
          <Title gap="gap-[12px]">Status info</Title>
          <Expand size={12} color="#dddddd" />
        </div>
        <div className="ml-[14px] mt-[24px] w-[1716px] h-[42px] flex justify-between">
          <div className="flex text-[14px]">
            <div className="w-[77px] h-[42px] flex items-center justify-center text-[#12b07f] border-t-2 border-t-[#12b07f] border-r border-[#eeeeee]">Asset</div>
            <div className="w-[122px] h-[42px] flex items-center justify-center text-[#8a8a8a] border-t border-r border-[#eeeeee]">Open orders</div>
            <div className="w-[147px] h-[42px] flex items-center justify-center text-[#8a8a8a] border-t border-r border-[#eeeeee]">Schedule orders</div>
          </div>
          <div className="flex items-start gap-[15px] pt-[6px] text-[#555]">
            <AiOutlineMenu size={17} />
            <AiOutlineCloudDownload size={17} />
            <AiOutlineSetting size={17} />
          </div>
        </div>
        <table className="ml-[14px] w-[1720px] table-fixed border-collapse">
          <thead>
            <tr>
              <Th w="w-[498px]">Futures_Binance</Th>
              <Th w="w-[341px]">FreeUSDT</Th>
              <Th w="w-[395px]">FrozenUSDT</Th>
              <Th w="w-[486px]">Update</Th>
            </tr>
          </thead>
          <tbody>
            <tr>
              <Td size="text-[13px]" cls="text-[#4f9bf0]">Current</Td>
              <Td size="text-[13px]">47304.6</Td>
              <Td size="text-[13px]">0</Td>
              <Td size="text-[13px]">2023-12-31 23:00:00</Td>
            </tr>
            <tr>
              <Td size="text-[13px]">Init</Td>
              <Td size="text-[13px]">50000</Td>
              <Td size="text-[13px]">0</Td>
              <Td size="text-[13px]">2023-12-01 00:00:00</Td>
            </tr>
            <tr>
              <Td size="text-[13px]" cls="text-[#e5393d]">Diff</Td>
              <Td size="text-[13px]" cls="text-[#ff1f2d]">-2695.3</Td>
              <Td size="text-[13px]">0</Td>
              <Td size="text-[13px]">2023-12-31 23:00:00</Td>
            </tr>
          </tbody>
        </table>
      </section>
      <Band />

      {/* Earnings overview */}
      <section className="w-[1749px] pt-[19px]">
        <div className="ml-[18px]"><Title gap="gap-[8px]">Earnings overview</Title></div>
        <div className="mt-[19px]"><GreenTab w="w-[220px]">Futures_Binance_BTC_USDT</GreenTab></div>
        <div className="mt-[27px] h-[20px] pl-[328px] pr-[32px] flex items-center justify-between font-['DejaVu_Sans',sans-serif]">
          <span className="text-[13.5px] text-[#666] whitespace-pre">Initial net value : 50000 Total profit: 2.785 %, Annualized returns (365 days) : 32.794 %, Sharpe ratio : 0.050, Volatility : 5.952 %, Maximum drawdown : 8.188 %</span>
          <span className="flex items-center gap-[13px] mt-[3px]">
            <span className="text-[11.3px] text-[#333]">FullScreen</span>
            <span className="flex flex-col gap-[2px]">
              <span className="block w-[16px] h-[3px] bg-[#666]" />
              <span className="block w-[16px] h-[3px] bg-[#666]" />
              <span className="block w-[16px] h-[3px] bg-[#666]" />
            </span>
          </span>
        </div>
        <div className="mt-[11px] h-[22px] pl-[28px] flex items-center font-['DejaVu_Sans',sans-serif] text-[12px]">
          <span className="w-[38px] text-[#666]">Zoom</span>
          <div className="flex gap-[5px]">
            {["1h","3h","8h","12h","24h"].map((t) => (
              <span key={t} className="w-[32px] h-[22px] flex items-center justify-center rounded-sm bg-[#f7f7f7] text-[#cccccc]">{t}</span>
            ))}
            <span className="w-[32px] h-[22px] flex items-center justify-center rounded-sm bg-[#e6ebf5] text-black font-bold">All</span>
          </div>
        </div>
        <div className="mt-[10px]"><EarningsChart /></div>
      </section>
    </div>
  );
}
